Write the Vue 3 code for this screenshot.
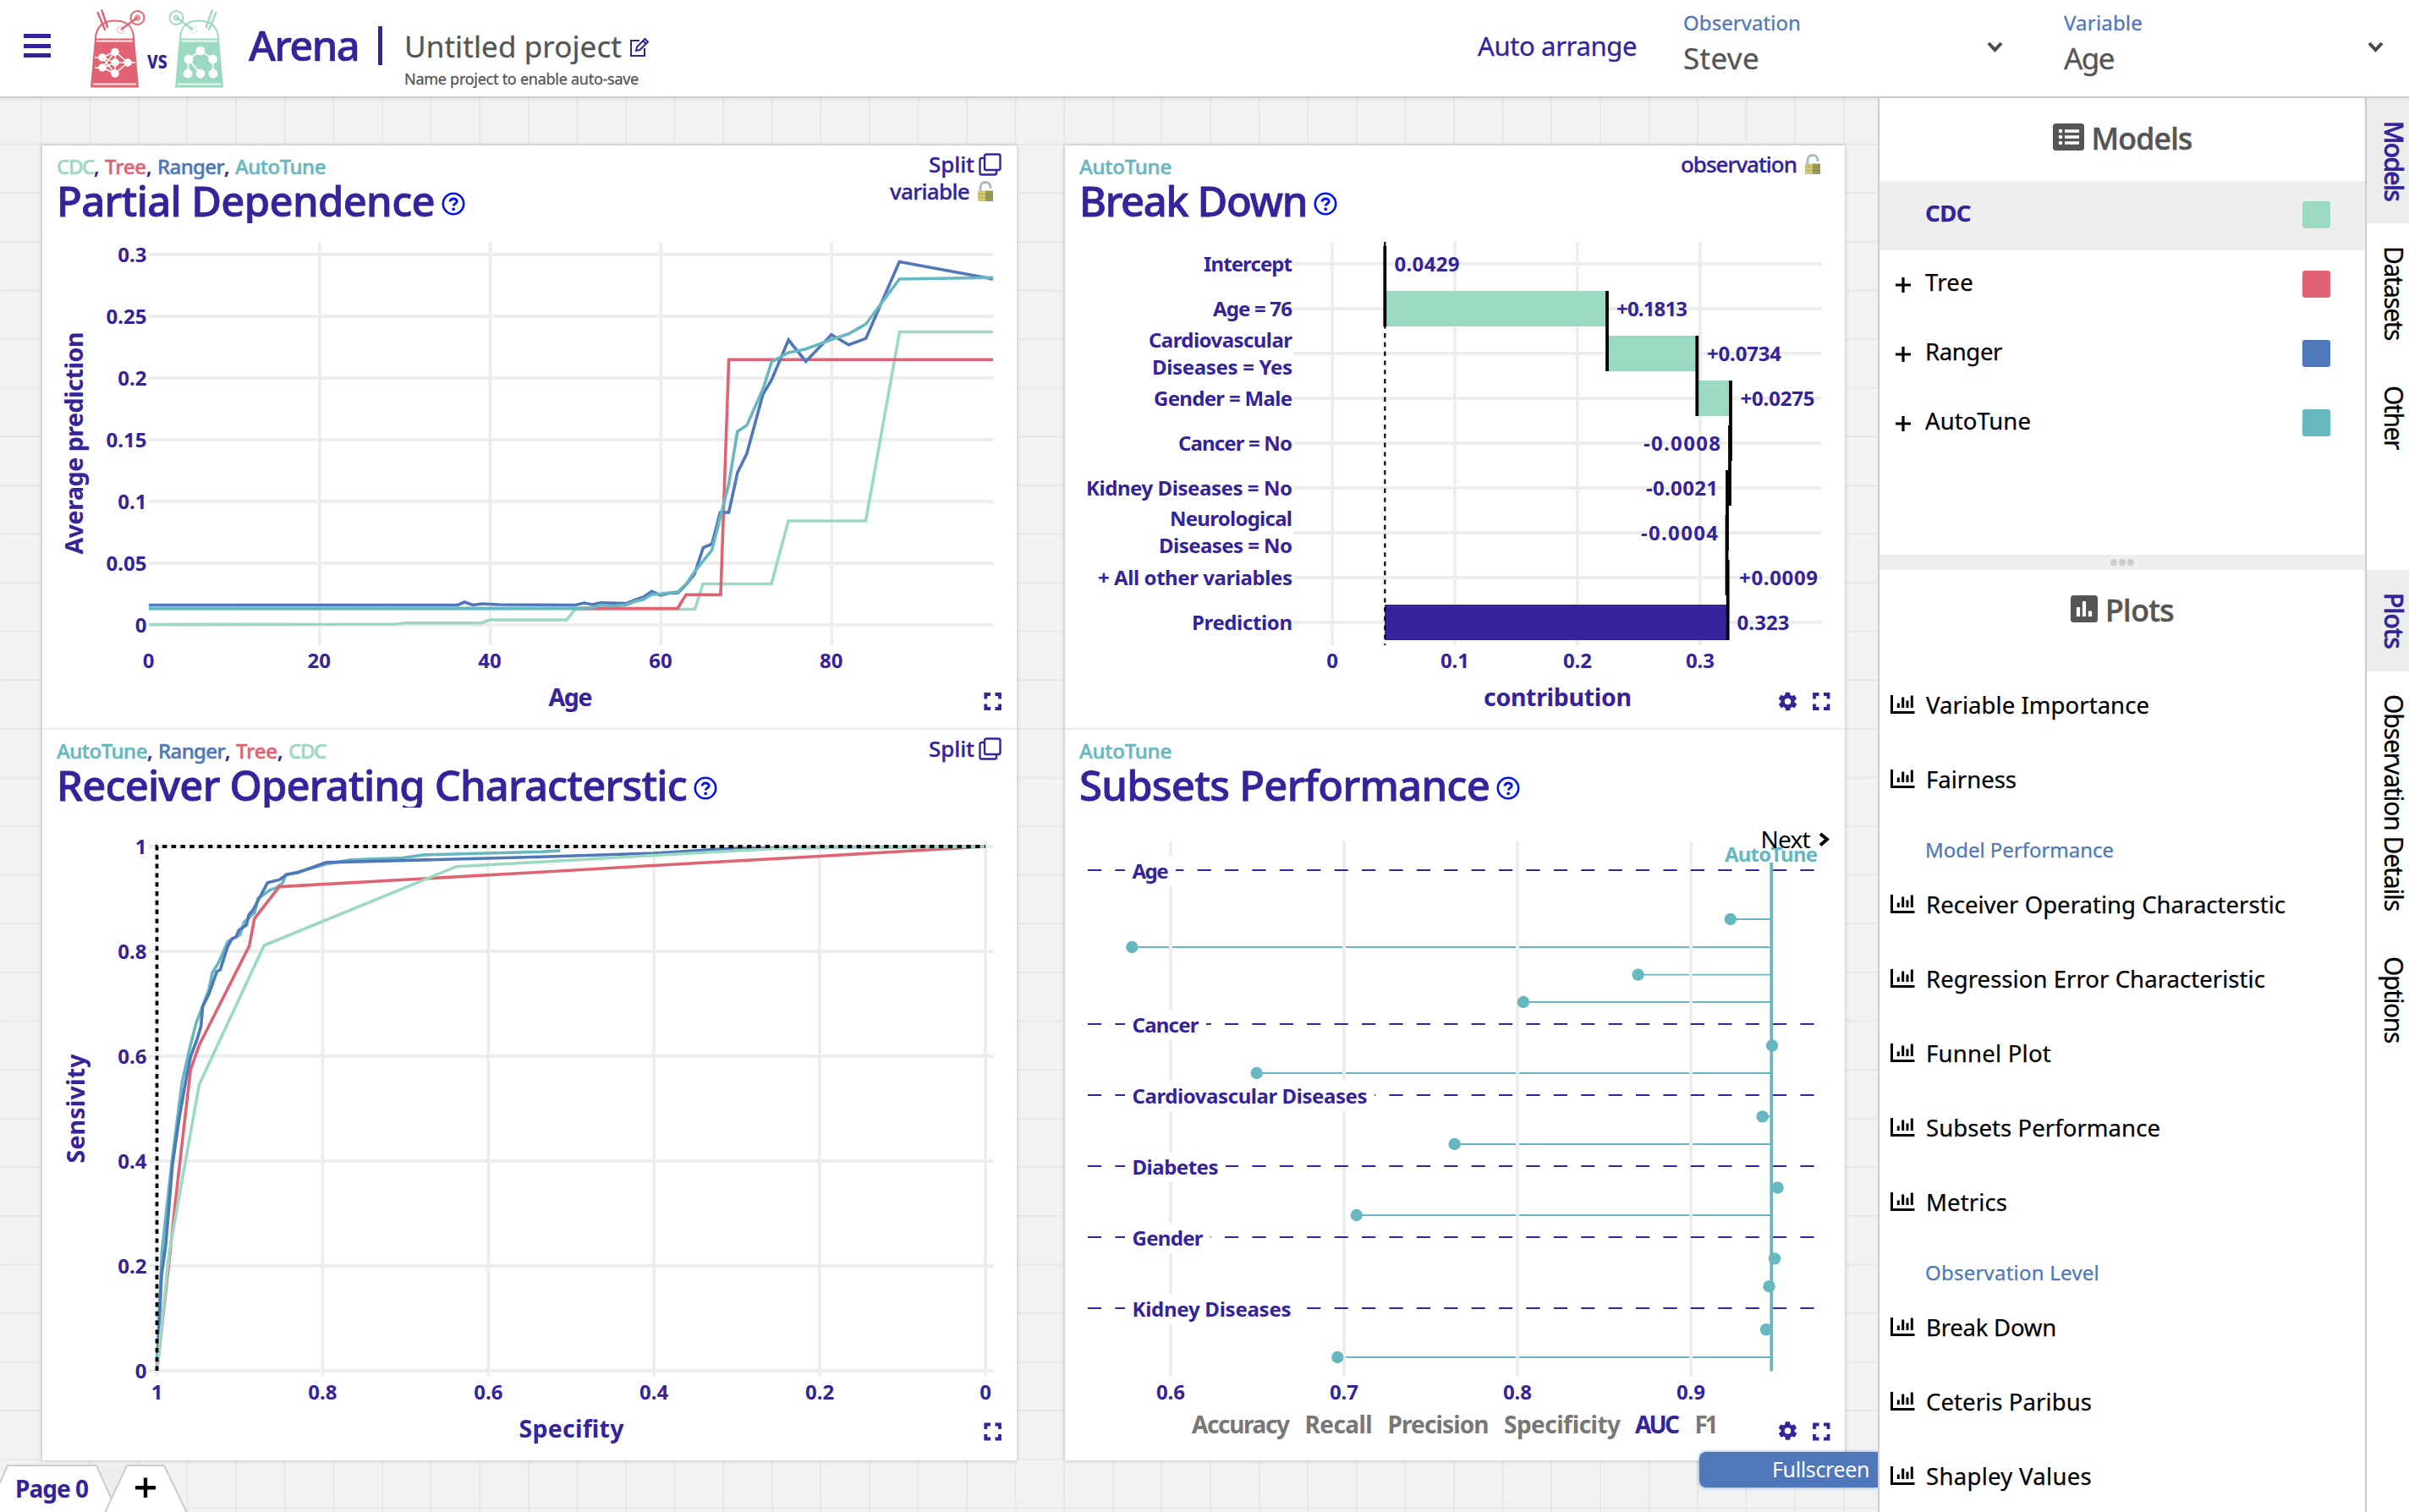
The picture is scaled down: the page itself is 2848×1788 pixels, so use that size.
<script setup>
const C = { cdc: '#9bd9c0', tree: '#e06373', ranger: '#4e78ba', auto: '#66b7c0' }

// Spreads the letters of an element so that it takes the given length
const vFit = {
  mounted(el, { value, modifiers }) {
    const box = el.getBoundingClientRect()
    const size = modifiers.v ? box.height : box.width
    el.style.letterSpacing = (value - size) / el.textContent.trim().length + 'px'
  },
}

const selects = [
  { label: 'Observation', lw: 139, value: 'Steve', vw: 90 },
  { label: 'Variable', lw: 93, value: 'Age', vw: 59 },
]
const models = [
  { name: 'CDC', w: 54, color: C.cdc, active: true },
  { name: 'Tree', w: 57, color: C.tree },
  { name: 'Ranger', w: 91, color: C.ranger },
  { name: 'AutoTune', w: 125, color: C.auto },
]
const plots = [
  { name: 'Variable Importance', w: 264 },
  { name: 'Fairness', w: 107 },
  { name: 'Model Performance', w: 223, group: true },
  { name: 'Receiver Operating Characterstic', w: 425 },
  { name: 'Regression Error Characteristic', w: 401 },
  { name: 'Funnel Plot', w: 148 },
  { name: 'Subsets Performance', w: 277 },
  { name: 'Metrics', w: 96 },
  { name: 'Observation Level', w: 206, group: true },
  { name: 'Break Down', w: 154 },
  { name: 'Ceteris Paribus', w: 196 },
  { name: 'Shapley Values', w: 196 },
]

const cards = [
  {
    id: 'pdp', title: 'Partial Dependence', tw: 447, split: true, lock: 'variable', lw: 94,
    models: [['CDC', C.cdc, 44], ['Tree', C.tree, 49], ['Ranger', C.ranger, 79], ['AutoTune', C.auto, 107]],
    box: '50 286 1152 577', h: 577,
  },
  {
    id: 'bd', title: 'Break Down', tw: 269, lock: 'observation', lw: 137,
    models: [['AutoTune', C.auto, 109]], box: '1259 286 922 577', h: 577,
  },
  {
    id: 'roc', title: 'Receiver Operating Characterstic', tw: 745, split: true,
    models: [['AutoTune', C.auto, 107], ['Ranger', C.ranger, 79], ['Tree', C.tree, 49], ['CDC', C.cdc, 44]],
    box: '50 977 1152 750', h: 750,
  },
  {
    id: 'sub', title: 'Subsets Performance', tw: 485,
    models: [['AutoTune', C.auto, 109]], box: '1259 977 922 750', h: 750,
  },
]

const pdpY = ['0.3', '0.25', '0.2', '0.15', '0.1', '0.05', '0'].map((t, i) => ({ t, y: 301 + i * 73 }))
const pdpX = [0, 20, 40, 60, 80].map((t) => ({ t, x: 176 + t * 10.09 }))
const pdpLines = [
  [C.cdc, '176,738.5 467,738 479,736.7 569,736.7 579,733 670,733 680,720.5 821.5,720.5 831,690.5 912,690.5 932,616 1023.5,616 1063.5,392.5 1174,392.5'],
  [C.tree, '176,719.5 801,719.5 811,703.3 852,703.3 861.6,425.2 1174,425.2'],
  [C.ranger, '176,715.5 541,715.5 549,712 559,715.5 570,714 590,715 680,715.5 690.6,713 700.4,715 710,712.7 740.4,713.6 750.6,709.5 760.8,706 770.6,699.3 780.8,703.8 791,701.5 801.6,701 811.4,691 821,678.8 831.4,647.5 841.6,643.5 851.4,606 861.6,606 871.8,559 882.9,536.3 902,466.3 912.2,449.3 932.2,402 952.7,427.4 982.9,395.7 1003.3,407.8 1023.7,400.2 1063.3,309.6 1174,330'],
  [C.auto, '176,719.8 680.8,719.5 700.4,718.5 710,715.4 720,716.7 740,715.4 750.6,711.3 760.8,708.7 770.6,702.9 780.8,702.4 801.6,699.7 811.4,690.4 821,676 841.6,650.6 861.6,572.5 871.8,510.4 882.9,502.9 902,460 912.2,427.9 932.2,417 952.7,412.7 982.9,401.5 1003.3,394.8 1023.7,383.2 1063.3,330 1174,328.3'],
]

const rocY = ['1', '0.8', '0.6', '0.4', '0.2', '0'].map((t, i) => ({ t, y: 1001 + i * 124 }))
const rocX = ['1', '0.8', '0.6', '0.4', '0.2', '0'].map((t, i) => ({ t, x: 185.5 + i * 195.9 }))
const rocLines = [
  [C.auto, '185.5,1621 188,1560 191.4,1480 202.9,1376.4 215.1,1280.7 223.7,1241.8 231.8,1210 239.6,1189.8 246.9,1170 251,1150.3 258.4,1138.3 269.4,1113.2 283.7,1105.4 288.6,1090.5 301.2,1079 304.9,1062.4 319.6,1052.2 325.3,1050.4 333.9,1044.4 338,1034.3 351.8,1031.3 385.7,1021.7 414.3,1016.9 475.5,1014.5 502,1010.9 640,1007.3 662.4,1006'],
  [C.ranger, '185.5,1621 191,1508 196,1472 204,1376.4 211.8,1322.6 219.2,1280.7 225.3,1249.6 232.7,1229.9 237.6,1213.7 239.6,1190.4 247.3,1174.8 256.3,1149 260.4,1146.7 269,1119.8 274.3,1110.2 279.2,1107.8 282.4,1100 291.4,1094 294.3,1081.5 299.2,1076 304,1067 316.3,1043.8 330.6,1040.2 338.8,1034.3 351.8,1031.9 385.7,1019.9 640,1013.3 773,1009 868.6,1003 1165,1001'],
  [C.tree, '185.5,1621 200,1490 209.4,1403 225.3,1265 235.5,1235.9 294.7,1118.6 300.8,1086.3 330.2,1048.6 640,1031.3 773,1023.5 965,1012.7 1165,1001'],
  [C.cdc, '185.5,1621 200,1481 235.5,1282.5 312.2,1118 539.6,1024.7 640,1019.3 773,1011.5 925.7,1003 1165,1001'],
]

const bdRows = [312, 365, 418, 471, 524, 577, 630, 683, 736]
const bdLabels = [
  ['Intercept', 320.5, 105], ['Age = 76', 373.5, 94], ['Cardiovascular', 411, 170], ['Diseases = Yes', 443, 166],
  ['Gender = Male', 479.5, 164], ['Cancer = No', 532.5, 135], ['Kidney Diseases = No', 585.5, 244],
  ['Neurological', 622, 145], ['Diseases = No', 654, 158], ['+ All other variables', 691.5, 230], ['Prediction', 744.5, 119],
]
const bdValues = [
  ['0.0429', 1648.5, 77, 320.5], ['+0.1813', 1911, 84, 373.5], ['+0.0734', 2018, 88, 426.5], ['+0.0275', 2057.5, 88, 479.5],
  ['-0.0008', 1943, 91, 532.5], ['-0.0021', 1946, 85, 585.5], ['-0.0004', 1940, 91, 638.5], ['+0.0009', 2056, 93, 691.5], ['0.323', 2053.5, 62, 744.5],
]
const bdBars = [[1637, 1900, 344, C.cdc], [1900, 2006, 397, C.cdc], [2006, 2046, 450, C.cdc], [1637, 2043, 715, '#34239a']]
const bdSteps = [[1637.3, 291, 386], [1900, 344, 439], [2006.3, 397, 492], [2046, 450, 545], [2045, 503, 598], [2042, 556, 651], [2041.5, 609, 704], [2042.7, 662, 757]]

const subGroups = [
  ['Age', 1029, 43], ['Cancer', 1211, 79], ['Cardiovascular Diseases', 1295, 278],
  ['Diabetes', 1379, 102], ['Gender', 1463, 84], ['Kidney Diseases', 1547, 188],
]
const subDots = [
  [2045.8, 1087], [1338.3, 1120], [1936.6, 1152.6], [1800.9, 1185], [2095, 1236.5], [1485.7, 1269], [2083.7, 1320.4],
  [1719.6, 1353], [2101.6, 1404.5], [1603.7, 1437], [2098, 1488.4], [2091.6, 1521.2], [2088, 1572.3], [1581.3, 1605],
]
const subX = [['0.6', 1384], ['0.7', 1589], ['0.8', 1794], ['0.9', 1999]]
const metrics = [['Accuracy', 1409, 116], ['Recall', 1542.5, 80], ['Precision', 1640.5, 120], ['Specificity', 1778, 138], ['AUC', 1933, 53], ['F1', 2003.5, 28]]

const gear = 'M19.4 13a7.6 7.6 0 0 0 0-2l2.1-1.6a.5.5 0 0 0 .1-.6l-2-3.5a.5.5 0 0 0-.6-.2l-2.5 1a7.3 7.3 0 0 0-1.7-1l-.4-2.6a.5.5 0 0 0-.5-.5h-4a.5.5 0 0 0-.5.5l-.4 2.6a7.7 7.7 0 0 0-1.7 1l-2.5-1a.5.5 0 0 0-.6.2l-2 3.5a.5.5 0 0 0 .1.6L4.6 11a8 8 0 0 0 0 2l-2.1 1.6a.5.5 0 0 0-.1.6l2 3.5c.1.2.4.3.6.2l2.5-1c.5.4 1.1.7 1.7 1l.4 2.6c0 .3.2.5.5.5h4c.3 0 .5-.2.5-.5l.4-2.6a7.3 7.3 0 0 0 1.7-1l2.5 1c.2.1.5 0 .6-.2l2-3.5a.5.5 0 0 0-.1-.6zM12 15.5a3.5 3.5 0 1 1 0-7 3.5 3.5 0 0 1 0 7z'
</script>

<template>
  <div class="app">
    <header class="topbar">
      <div class="burger"><i></i><i></i><i></i></div>
      <svg class="logo" width="158" height="94" viewBox="107 11 158 94">
        <g v-for="bot in ['red', 'green']" :key="bot" :class="bot" :transform="bot === 'green' ? 'translate(371 0) scale(-1 1)' : null">
          <path d="M113 46C113 31 123 24.500 136 24.500S158 31 158 46" fill="none" stroke="currentColor" stroke-width="2" />
          <path d="M112 45.500H159L164 103.500H107Z" fill="currentColor" />
          <path d="M114 48.500H157M110 99.500H161" stroke="#fff" stroke-width="2" opacity=".85" />
          <path d="M115.500 15L124 35M120.500 12.500L127 32" stroke="currentColor" stroke-width="2.400" stroke-linecap="round" />
          <circle cx="162.500" cy="21" r="8" fill="none" stroke="currentColor" stroke-width="2" />
          <circle cx="162.500" cy="21" r="3.800" fill="currentColor" opacity=".7" />
          <path d="M162 21L143 35" stroke="currentColor" stroke-width="2.200" />
          <circle cx="142.500" cy="35.500" r="4" fill="none" stroke="currentColor" opacity=".5" />
        </g>
        <g stroke="#fff" stroke-width="1.500" fill="#fff">
          <path d="M121 68L136 61L151 74L136 87L121 80L136 74H151M121 68L136 74M121 68L136 87M121 80L136 61M136 61V87M112 68H121M112 80H121M151 74H160" fill="none" />
          <circle v-for="(p, i) in [[121, 68], [121, 80], [136, 61.5], [136, 74], [136, 87], [151, 74]]" :key="i" :cx="p[0]" :cy="p[1]" r="4" />
        </g>
        <g stroke="#fff" stroke-width="1.800" fill="#fff">
          <path d="M237 60L223 70L222 87M237 60L251.500 70L252 87M223 70L237 87" fill="none" />
          <circle v-for="(p, i) in [[237, 60], [223, 70], [251.5, 70], [222, 87], [237, 87], [252, 87]]" :key="i" :cx="p[0]" :cy="p[1]" r="4.500" />
        </g>
        <text x="174" y="81" class="vs" textLength="24" lengthAdjust="spacingAndGlyphs">vs</text>
      </svg>
      <span v-fit="130" class="brand">Arena</span>
      <div class="bar"></div>
      <div class="project">
        <div class="pname">
          <span v-fit="257">Untitled project</span>
          <svg width="24" height="24" viewBox="0 0 24 24" fill="none" stroke="#34239a" stroke-width="2">
            <path d="M12 4H2V22H18V13" /><path d="M8 16L9 11.500L18.500 2L22 5.500L12.500 15Z M16.500 4.500L20 8" />
          </svg>
        </div>
        <span v-fit="277" class="hint">Name project to enable auto-save</span>
      </div>
      <span v-fit="188" class="arrange">Auto arrange</span>
      <div v-for="s in selects" :key="s.label" class="select">
        <div class="sel-text">
          <span v-fit="s.lw" class="sel-label">{{ s.label }}</span>
          <span v-fit="s.vw" class="sel-value">{{ s.value }}</span>
        </div>
        <svg width="19" height="13" viewBox="0 0 19 13"><path d="M2 2L9.500 10L17 2" fill="none" stroke="#4a4a4a" stroke-width="4" /></svg>
      </div>
    </header>

    <div class="main">
      <main class="work">
        <div class="cards">
          <section v-for="c in cards" :key="c.id" class="card">
            <div class="head">
              <div class="head-left">
                <div class="names">
                  <template v-for="(m, i) in c.models" :key="m[0]"><span v-if="i" class="comma">, </span><span v-fit="m[2]" class="mname" :style="{ color: m[1] }">{{ m[0] }}</span></template>
                </div>
                <div class="title">
                  <span v-fit="c.tw">{{ c.title }}</span>
                  <svg class="help" width="28" height="28" viewBox="0 0 28 28">
                    <circle cx="14" cy="14" r="12.200" fill="none" stroke="#0014e6" stroke-width="2.600" />
                    <path d="M10 11.500C10 7 18.200 7 18.200 11.200C18.200 14 14.200 13.600 14.200 16.600" fill="none" stroke="#0014e6" stroke-width="3" />
                    <circle cx="14.200" cy="20.300" r="1.900" fill="#0014e6" />
                  </svg>
                </div>
              </div>
              <div class="head-right">
                <div v-if="c.split" class="line">
                  <span v-fit="54">Split</span>
                  <svg width="27" height="27" viewBox="0 0 27 27" fill="none" stroke="#34239a" stroke-width="2.400">
                    <rect x="7" y="1.500" width="18.500" height="18.500" rx="2" /><path d="M7 6H3.500Q1.500 6 1.500 8V23.500Q1.500 25.500 3.500 25.500H19Q21 25.500 21 23.500V20" />
                  </svg>
                </div>
                <div v-if="c.lock" class="line lockline" :class="{ lone: !c.split }">
                  <span v-fit="c.lw">{{ c.lock }}</span>
                  <svg width="20" height="26" viewBox="0 0 20 26">
                    <path d="M4 13V8.500C4 .5 16 .5 16 8.500V10" fill="none" stroke="#a9b7c4" stroke-width="2.800" />
                    <rect x="1" y="12.500" width="10" height="12.500" fill="#cfc778" /><rect x="10" y="12.500" width="9" height="12.500" fill="#9d9555" />
                    <path d="M1 16.500H19M1 20.500H19" stroke="#7d763c" stroke-opacity=".3" />
                  </svg>
                </div>
              </div>
            </div>

            <svg class="chart" width="100%" :height="c.h" :viewBox="c.box">
              <template v-if="c.id === 'pdp'">
                <path v-for="t in pdpY" :key="t.t" class="grid" :d="`M176 ${t.y}H1174.700`" />
                <path v-for="t in pdpX.slice(1)" :key="t.t" class="grid" :d="`M${t.x} 286V762.700`" />
                <polyline v-for="l in pdpLines" :key="l[0]" class="curve" :points="l[1]" :stroke="l[0]" />
                <text v-for="t in pdpY" :key="t.t" class="end" x="173.500" :y="t.y + 8.5">{{ t.t }}</text>
                <text v-for="t in pdpX" :key="t.t" class="mid" :x="t.x - 0.5" y="790">{{ t.t }}</text>
                <text class="axis" transform="translate(98 655.500) rotate(-90)" textLength="263">Average prediction</text>
                <text class="axis" x="648.500" y="834.500" textLength="52">Age</text>
                <path class="full" d="M1165.300 826.500V821H1171M1176.500 821H1182V826.500M1182 832.500V838H1176.500M1171 838H1165.300V832.500" />
              </template>

              <template v-else-if="c.id === 'bd'">
                <path v-for="y in bdRows" :key="y" class="grid" :d="`M1529 ${y}H2153.700`" />
                <path v-for="x in [1575, 1720, 1865, 2010]" :key="x" class="grid" :d="`M${x} 286V762.700`" />
                <rect v-for="(b, i) in bdBars" :key="i" :x="b[0]" :y="b[2]" :width="b[1] - b[0]" height="42" :fill="b[3]" />
                <path d="M1637.300 286V763" stroke="#000" stroke-width="2.200" stroke-dasharray="5.400 5.400" />
                <path v-for="(s, i) in bdSteps" :key="i" :d="`M${s[0]} ${s[1]}V${s[2]}`" stroke="#000" stroke-width="3.800" />
                <text v-for="l in bdLabels" :key="l[0]" :x="1528 - l[2]" :y="l[1]" :textLength="l[2]">{{ l[0] }}</text>
                <text v-for="v in bdValues" :key="v[0]" :x="v[1]" :y="v[3]" :textLength="v[2]">{{ v[0] }}</text>
                <text v-for="(t, i) in ['0', '0.1', '0.2', '0.3']" :key="t" class="mid" :x="1575 + i * 145" y="790">{{ t }}</text>
                <text class="axis" x="1754" y="834.500" textLength="175">contribution</text>
                <svg x="2100.500" y="816.500" width="26" height="26" viewBox="0 0 24 24"><path :d="gear" fill="#34239a" /></svg>
                <path class="full" d="M2145 826.500V821H2150.500M2156 821H2161.500V826.500M2161.500 832.500V838H2156M2150.500 838H2145V832.500" />
              </template>

              <template v-else-if="c.id === 'roc'">
                <path v-for="t in rocY" :key="t.t" class="grid" :d="`M176 ${t.y}H1174.700`" />
                <path v-for="t in rocX" :key="t.t" class="grid" :d="`M${t.x} 995V1627.700`" />
                <polyline v-for="l in rocLines" :key="l[0]" class="curve" :points="l[1]" :stroke="l[0]" />
                <path d="M185.500 1621V1001H1165" fill="none" stroke="#000" stroke-width="3.800" stroke-dasharray="5.400 5.400" />
                <text v-for="t in rocY" :key="t.t" class="end" x="173.500" :y="t.y + 8.5">{{ t.t }}</text>
                <text v-for="t in rocX" :key="t.t" class="mid" :x="t.x" y="1654.500">{{ t.t }}</text>
                <text class="axis" transform="translate(100 1375.500) rotate(-90)" textLength="129">Sensivity</text>
                <text class="axis" x="613.500" y="1699.500" textLength="124">Specifity</text>
                <path class="full" d="M1165.300 1690V1684.500H1171M1176.500 1684.500H1182V1690M1182 1696V1701.500H1176.500M1171 1701.500H1165.300V1696" />
              </template>

              <template v-else>
                <path v-for="(d, i) in subDots" :key="i" :d="`M${d[0]} ${d[1]}H2094.300`" stroke="#66b7c0" stroke-width="1.900" />
                <path v-for="t in subX" :key="t[0]" class="grid" :d="`M${t[1]} 995V1627.700`" />
                <template v-for="g in subGroups" :key="g[0]">
                  <path :d="`M1286 ${g[1]}H2145.500`" stroke="#34239a" stroke-width="2" stroke-dasharray="16.200 16.200" />
                  <rect x="1330" :y="g[1] - 17" :width="g[2] + 17" height="36" fill="#fff" />
                  <text x="1338.500" :y="g[1] + 10" :textLength="g[2]">{{ g[0] }}</text>
                </template>
                <path d="M2094.300 1020V1621.500" stroke="#66b7c0" stroke-width="3.800" />
                <circle v-for="(d, i) in subDots" :key="i" :cx="d[0]" :cy="d[1]" r="7.200" fill="#66b7c0" />
                <text class="teal" x="2039" y="1019" textLength="110">AutoTune</text>
                <text class="next" x="2081.500" y="1002.500" textLength="59">Next</text>
                <path d="M2152 986L2160 992.500L2152 999.500" fill="none" stroke="#000" stroke-width="4" />
                <text v-for="t in subX" :key="t[0]" class="mid" :x="t[1]" y="1654.500">{{ t[0] }}</text>
                <text v-for="m in metrics" :key="m[0]" class="metric" :class="{ on: m[0] === 'AUC' }" :x="m[1]" y="1694.500" :textLength="m[2]">{{ m[0] }}</text>
                <svg x="2100.500" y="1679" width="26" height="26" viewBox="0 0 24 24"><path :d="gear" fill="#34239a" /></svg>
                <path class="full" d="M2145 1690V1684.500H2150.500M2156 1684.500H2161.500V1690M2161.500 1696V1701.500H2156M2150.500 1701.500H2145V1696" />
              </template>
            </svg>
          </section>
        </div>
        <div class="pages">
          <svg width="224" height="56" viewBox="0 0 224 56">
            <path d="M114 1H150L132 40Z" fill="#eee" />
            <path d="M-16 57L9 1H114L139 57" fill="#fff" stroke="#ccc" stroke-width="2" />
            <path d="M124 57L150 1H194L221 57" fill="#fff" stroke="#ccc" stroke-width="2" />
            <path d="M160 27.300H184M172 15.500V39" stroke="#000" stroke-width="4.400" />
            <text x="18" y="38.500" class="page" textLength="87">Page 0</text>
          </svg>
        </div>
        <div class="fullscreen"><span v-fit="115">Fullscreen</span></div>
      </main>

      <aside class="side">
        <div class="panel models">
          <div class="ptitle">
            <svg width="37" height="32" viewBox="0 0 37 32">
              <rect width="37" height="32" rx="3.500" fill="#555" />
              <path d="M14 9H31M14 16H31M14 23H31" stroke="#fff" stroke-width="3.400" />
              <circle v-for="y in [9, 16, 23]" :key="y" cx="9" :cy="y" r="2.300" fill="#fff" />
            </svg>
            <span v-fit="119">Models</span>
          </div>
          <div v-for="m in models" :key="m.name" class="model" :class="{ active: m.active }">
            <svg class="plus" width="20" height="20" viewBox="0 0 20 20"><path v-if="!m.active" d="M1 10H19M10 1V19" stroke="#000" stroke-width="3.200" /></svg>
            <span v-fit="m.w">{{ m.name }}</span>
            <i class="swatch" :style="{ background: m.color }"></i>
          </div>
        </div>
        <div class="split"><i></i><i></i><i></i></div>
        <div class="panel plots">
          <div class="ptitle plot-title">
            <svg width="32" height="32" viewBox="0 0 32 32">
              <rect width="32" height="32" rx="3.500" fill="#555" />
              <path d="M9 14V25M16 7V25M23 18.500V25" stroke="#fff" stroke-width="4.200" />
            </svg>
            <span v-fit="81">Plots</span>
          </div>
          <div v-for="p in plots" :key="p.name" :class="p.group ? 'group' : 'plot'">
            <svg v-if="!p.group" width="29" height="22" viewBox="0 0 29 22">
              <path d="M1.500 0V20.500H28.500" fill="none" stroke="#000" stroke-width="3" />
              <path d="M9.300 9.500V15M14.700 2.500V15M20 6.500V15M25.300 .5V15" stroke="#000" stroke-width="3" />
            </svg>
            <span v-fit="p.w">{{ p.name }}</span>
          </div>
        </div>
      </aside>

      <nav class="tabs">
        <div class="tabset first">
          <div class="tab on"><span v-fit.v="94">Models</span></div>
          <div class="tab"><span v-fit.v="111">Datasets</span></div>
          <div class="tab"><span v-fit.v="75">Other</span></div>
        </div>
        <div class="tabset">
          <div class="tab on"><span v-fit.v="66">Plots</span></div>
          <div class="tab"><span v-fit.v="256">Observation Details</span></div>
          <div class="tab"><span v-fit.v="102">Options</span></div>
        </div>
      </nav>
    </div>
  </div>
</template>

<style>
body { margin: 0; }
</style>

<style scoped>
.app { width: 2848px; height: 1788px; overflow: hidden; display: flex; flex-direction: column; font-family: "Noto Sans", "Open Sans", sans-serif; background: #fff; color: #000; }
span { white-space: nowrap; display: inline-block; }
.topbar { box-sizing: border-box; height: 116px; flex: none; display: flex; align-items: flex-start; border-bottom: 2px solid #ccc; padding-right: 30px; background: #fff; }
.burger { width: 32px; margin: 40px 47px 0 28px; display: flex; flex-direction: column; gap: 6.5px; }
.burger i { height: 5px; background: #34239a; }
.logo { margin-top: 11px; flex: none; }
.red { color: #e06373; }
.green { color: #9bd9c0; }
.vs { font-size: 28px; font-weight: 700; fill: #34239a; }
.brand { margin: 23px 0 0 29px; font-size: 49px; line-height: 60px; font-weight: 500; color: #34239a; -webkit-text-stroke: .6px currentColor; }
.bar { width: 5px; height: 46px; background: #34239a; margin: 31px 0 0 23px; }
.project { margin: 35px 0 0 26px; color: #555; display: flex; flex-direction: column; gap: 7px; align-items: flex-start; -webkit-text-stroke: .3px currentColor; }
.pname { font-size: 35px; line-height: 40px; height: 40px; display: flex; gap: 9px; }
.pname svg { margin-top: 9px; }
.hint { font-size: 18px; line-height: 22px; }
.arrange { margin: 34px 55px 0 auto; font-size: 31px; line-height: 40px; color: #34239a; -webkit-text-stroke: .3px currentColor; }
.select { width: 378px; display: flex; justify-content: space-between; color: #555; -webkit-text-stroke: .3px currentColor; }
.select + .select { margin-left: 72px; }
.select svg { margin-top: 49px; }
.sel-text { display: flex; flex-direction: column; align-items: flex-start; padding-top: 12px; gap: 4px; }
.sel-label { font-size: 24px; line-height: 30px; color: #4e78ba; }
.sel-value { font-size: 35px; line-height: 46px; }

.main { flex: 1; display: flex; min-height: 0; }
.work { position: relative; width: 2220px; flex: none; overflow: hidden; background-color: #f2f2f2;
  background-image: linear-gradient(to right, #e7e7e7 2px, transparent 2.5px), linear-gradient(to bottom, #e7e7e7 2px, transparent 2.5px);
  background-size: 57.6px 57.6px; background-position: 47.8px 53.8px; box-shadow: inset 0 5px 6px -4px rgba(0, 0, 0, .08); }
.cards { display: grid; grid-template-columns: 1152px 922px; grid-template-rows: 691px 864px; column-gap: 57px; padding: 56px 0 0 50px; }
.card { background: #fff; box-shadow: 0 0 5px rgba(0, 0, 0, .22); display: flex; flex-direction: column; }
.head { height: 114px; flex: none; display: flex; justify-content: space-between; box-sizing: border-box; padding: 10px 18px 0 17px; color: #34239a; }
.names { font-size: 24px; line-height: 30px; height: 30px; font-weight: 500; white-space: nowrap; -webkit-text-stroke: .5px currentColor; }
.comma { width: 13px; white-space: pre; }
.title { display: flex; height: 52px; overflow: hidden; font-size: 49px; line-height: 51px; font-weight: 500; gap: 8px; -webkit-text-stroke: .8px currentColor; }
.help { margin-top: 15px; flex: none; }
.head-right { font-size: 26px; line-height: 32px; font-weight: 500; margin-top: -4px; display: flex; flex-direction: column; align-items: flex-end; -webkit-text-stroke: .3px currentColor; }
.line { display: flex; height: 32px; gap: 5px; }
.line svg { margin-top: 3px; }
.lockline { gap: 9px; padding-right: 9px; }
.lone { padding-right: 10px; }
.chart { display: block; flex: none; }
.chart text { font-size: 24px; font-weight: 700; fill: #34239a; }
.chart .axis { font-size: 28.5px; }
.chart .end { text-anchor: end; }
.chart .mid { text-anchor: middle; }
.chart .teal { fill: #66b7c0; }
.chart .next { fill: #000; font-size: 28px; font-weight: 400; }
.chart .metric { fill: #777; font-size: 28px; }
.chart .on { fill: #34239a; }
.grid { stroke: #ededed; stroke-width: 3.8px; fill: none; }
.curve { fill: none; stroke-width: 3.6px; }
.full { fill: none; stroke: #34239a; stroke-width: 3.8px; }
.pages { position: absolute; left: 0; bottom: 0; height: 56px; }
.page { font-size: 28px; font-weight: 700; fill: #34239a; }
.fullscreen { position: absolute; right: 0; top: 1601px; width: 211px; height: 42px; box-sizing: border-box; background: #4e78ba; border-radius: 8px 0 0 8px; color: #fff; font-size: 25px; line-height: 41px; text-align: right; padding-right: 10px; box-shadow: 0 0 4px rgba(78, 120, 186, .7); }

.side { box-sizing: border-box; width: 578px; flex: none; border-left: 2px solid #ccc; border-right: 2px solid #ccc; background: #fff; display: flex; flex-direction: column; }
.panel { flex: none; -webkit-text-stroke: .25px currentColor; }
.models { height: 540px; }
.plots { height: 1114px; overflow: hidden; }
.ptitle { height: 98px; display: flex; justify-content: center; gap: 9px; font-size: 35.5px; line-height: 44px; font-weight: 500; color: #555; -webkit-text-stroke: .6px currentColor; }
.models .ptitle svg { margin-top: 30px; }
.models .ptitle span { margin-top: 25px; }
.plot-title { height: 116px; }
.plot-title svg { margin-top: 30px; }
.plot-title span { margin-top: 25px; }
.model { height: 82px; display: flex; align-items: center; padding: 0 41px 0 18px; font-size: 27.5px; }
.model.active { background: #eee; color: #34239a; font-weight: 700; }
.model span { margin-left: 16px; position: relative; top: -4px; }
.plus { flex: none; }
.swatch { width: 33px; height: 32px; border-radius: 3px; margin-left: auto; position: relative; top: -1px; }
.split { height: 18px; background: #eee; display: flex; justify-content: center; align-items: center; gap: 2px; }
.split i { width: 8px; height: 8px; border-radius: 50%; background: #ccc; }
.plot { height: 88px; display: flex; align-items: center; padding-left: 13px; gap: 13px; font-size: 27.5px; }
.plot svg { flex: none; margin-top: -2px; }
.plot span { margin-top: -1px; }
.group { height: 60px; padding-left: 54px; color: #4e78ba; font-size: 24px; line-height: 77px; }

.tabs { flex: 1; display: flex; flex-direction: column; font-size: 30px; line-height: 36px; -webkit-text-stroke: .25px currentColor; }
.tabset { display: flex; flex-direction: column; }
.first { height: 558px; }
.tab { box-sizing: border-box; width: 50px; writing-mode: vertical-rl; padding: 27px 0; }
.tab.on { background: #ededed; color: #34239a; font-weight: 500; -webkit-text-stroke: .6px currentColor; }
</style>
